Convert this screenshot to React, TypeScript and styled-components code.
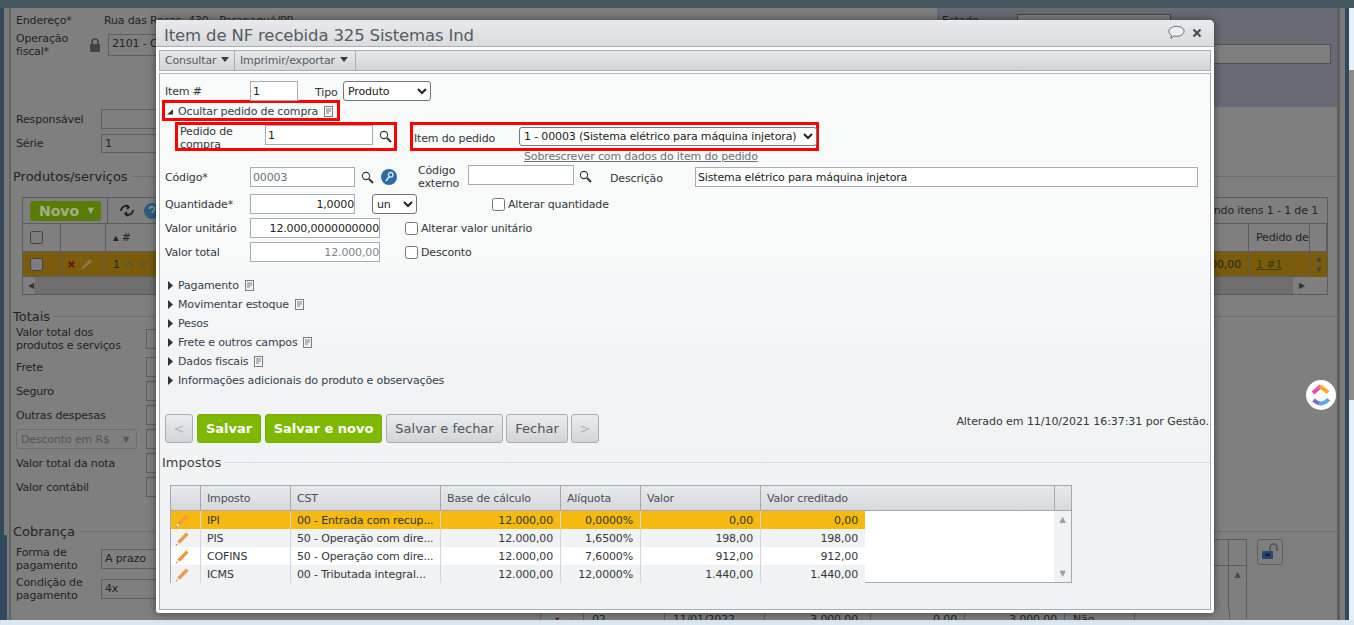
import React from "react";
import styled, { createGlobalStyle } from "styled-components";

const Global = createGlobalStyle`
  html, body { margin: 0; padding: 0; height: 625px; overflow: hidden; }
  body { font-family: "DejaVu Sans", Verdana, sans-serif; font-size: 11px; letter-spacing: -0.15px; }
  * { box-sizing: border-box; }
`;

/* ---------- page shell ---------- */
const Page = styled.div`position: relative; width: 1354px; height: 625px; overflow: hidden; display: flex; flex-direction: column; background: #7f7f7f;`;
const TopBar = styled.div`height: 8px; flex: none; background: #45575f;`;
const Middle = styled.div`height: 612px; flex: none; display: flex;`;
const BottomStrip = styled.div`flex: 1; background: #d9e7f2;`;
const LeftRail = styled.div`width: 11px; flex: none; display: flex; flex-direction: column; background: #7b7b7b; border-right: 2px solid #636363;`;
const RailDark = styled.div<{ $w: number; $h?: number }>`width: ${p => p.$w}px; flex: ${p => (p.$h ? "none" : 1)}; height: ${p => (p.$h ? `${p.$h}px` : "auto")}; background: #33475f;`;
const Main = styled.main`width: 1327px; flex: none; height: 612px; overflow: hidden; color: #232323; padding-left: 5px; border-right: 1px solid #5c5c5c;`;
const RightRail = styled.div`width: 16px; flex: none; display: flex; background: #7b7b7b; border-left: 2px solid #5f5f5f;`;
const RailGap = styled.div`width: 5px; flex: none;`;
const RailBlue = styled.div`width: 4px; flex: none; background: #33475f;`;
const ScrollTrack = styled.div`flex: 1; display: flex; flex-direction: column; background: #e7eff5;`;
const ScrollThumb = styled.div`height: 330px; margin-top: 62px; background: #8c8c8c;`;

/* ---------- dimmed background ---------- */
const HeaderRow = styled.div`height: 99px; margin-left: -5px; display: flex;`;
const HeaderLeft = styled.div`flex: 1; padding: 5px 0 0 5px;`;
const HeaderRight = styled.div`width: 400px; flex: none; background: #6a6a74; padding: 6px 6px 0 5px;`;
const StateRow = styled.div`display: flex; align-items: flex-start;`;
const StateLabel = styled.span`width: 75px; flex: none;`;
const StateBox = styled.div`width: 154px; height: 20px; border: 1px solid #444; background: #7f7f7f;`;
const WideBox = styled.div`height: 20px; margin: 10px 0 0 22px; border: 1px solid #505050; background: #7f7f7f;`;
const Inline = styled.div<{ $h?: number; $mt?: number }>`display: flex; align-items: center; height: ${p => p.$h ?? 14}px; margin-top: ${p => p.$mt ?? 0}px;`;
const BgLabel = styled.span<{ $w?: number }>`width: ${p => p.$w ?? 85}px; flex: none; line-height: 13px;`;
const BgValue = styled.span`padding-left: 3px; white-space: nowrap;`;
const BgBox = styled.div<{ $w?: number; $h?: number }>`width: ${p => p.$w ?? 60}px; height: ${p => p.$h ?? 20}px; flex: none; border: 1px solid #5f5f5f; padding: 2px 3px; white-space: nowrap; overflow: hidden;`;
const LockSlot = styled.span`width: 19px; flex: none; display: flex; color: #444;`;
const Legend = styled.div<{ $mt: number }>`display: flex; align-items: center; gap: 4px; height: 14px; margin: ${p => p.$mt}px 0 0 -3px; font-size: 13px; letter-spacing: 0; white-space: nowrap;`;
const LegendLine = styled.span<{ $c?: string }>`flex: 1; height: 1px; background: ${p => p.$c ?? "#6d6d6d"};`;

const BgTable = styled.div`width: 1306px; height: 98px; margin: 14px 0 0 6px; border: 1px solid #5c5c5c;`;
const BgToolbar = styled.div`height: 26px; display: flex; align-items: center; padding: 0 9px 0 7px; border-bottom: 1px solid #5c5c5c; color: #262626;`;
const NovoButton = styled.div`width: 71px; height: 20px; background: #5a7d0a; border-radius: 3px; color: #a0ae88; font-size: 14px; font-weight: bold; letter-spacing: 0; display: flex; align-items: center; justify-content: space-between; padding: 0 7px 0 9px;`;
const SmallArrow = styled.span`font-size: 8px;`;
const BgDivider = styled.span`width: 1px; height: 26px; background: #5c5c5c; margin: 0 10px 0 6px;`;
const PushRight = styled.span`margin-left: auto; white-space: nowrap;`;
const BgGrid = styled.div<{ $h: number; $bg?: string }>`display: grid; grid-template-columns: 38px 45px 1fr 61px 17px; height: ${p => p.$h}px; background: ${p => p.$bg ?? "transparent"};`;
const BgCell = styled.div<{ $between?: boolean }>`display: flex; align-items: center; justify-content: ${p => (p.$between ? "space-between" : "flex-start")}; gap: 5px; padding: 0 7px; border-right: 1px solid #5c5c5c; border-bottom: 1px solid #5c5c5c; white-space: nowrap; overflow: hidden;`;
const FakeCheck = styled.span`width: 13px; height: 13px; flex: none; border: 1px solid #444; border-radius: 2px; background: #7d7d7d;`;
const Underlined = styled.span`text-decoration: underline; color: #3f3a10;`;
const Ordering = styled.span`display: inline-flex; align-items: center; gap: 5px;`;
const ScrollCell = styled.div`display: flex; flex-direction: column; align-items: center; justify-content: center; gap: 5px; color: #444; font-size: 7px; line-height: 6px;`;
const BgScrollRow = styled.div`height: 17px; display: flex; align-items: center; justify-content: space-between; padding: 0 22px 0 5px; color: #333; font-size: 8px; background: linear-gradient(90deg, #7f7f7f 12px, #6f6f6f 12px, #6f6f6f 1270px, #7f7f7f 1270px);`;

const TotalRow = styled.div<{ $h: number }>`display: flex; align-items: center; height: ${p => p.$h}px;`;
const TotalLabel = styled.span`width: 130px; flex: none; line-height: 13px;`;
const DimSelect = styled.div`width: 121px; margin-right: 9px; flex: none; height: 20px; border: 1px solid #6c6c6c; border-radius: 3px; color: #555; display: flex; align-items: center; justify-content: space-between; padding: 0 7px 0 4px; white-space: nowrap;`;
const CobrancaRow = styled.div`display: flex; align-items: flex-start; margin-top: 1px;`;
const CobrancaFields = styled.div`width: 524px; flex: none; padding-top: 5px;`;
const CobrancaLabel = styled.span`width: 85px; flex: none; line-height: 13px;`;
const CobrancaTable = styled.div`width: 707px; flex: none; height: 80px; border-left: 1px solid #5c5c5c; border-top: 1px solid #5c5c5c; border-right: 1px solid #5c5c5c;`;
const CobrancaHead = styled.div`height: 26px; border-bottom: 1px solid #5c5c5c; display: flex; justify-content: flex-end;`;
const CobrancaHeadEnd = styled.div`width: 18px; border-left: 1px solid #5c5c5c;`;
const CobrancaSpace = styled.div`height: 44px; display: flex; justify-content: flex-end;`;
const CobrancaScroll = styled.div`width: 18px; display: flex; justify-content: center; padding-top: 5px; font-size: 8px; line-height: 8px; color: #4a4a4a; border-left: 1px solid #5c5c5c;`;
const CobrancaData = styled.div`display: grid; grid-template-columns: 6px 37px 81px 100px 106px 94px 100px 70px 95px 18px; height: 18px; align-items: center;`;
const DataCell = styled.div<{ $right?: boolean; $pr?: number }>`height: 18px; display: flex; align-items: center; gap: 7px; justify-content: ${p => (p.$right ? "flex-end" : "flex-start")}; padding: 0 ${p => p.$pr ?? 7}px 0 8px; border-right: 1px solid #5c5c5c; white-space: nowrap;`;
const LockButton = styled.div`width: 26px; height: 26px; margin-left: 10px; flex: none; border: 1px solid #5f5f5f; border-radius: 3px; display: flex; align-items: center; justify-content: center;`;

/* ---------- modal ---------- */
const Modal = styled.section`position: absolute; left: 156px; top: 20px; width: 1058px; height: 593px; background: #fff; border-radius: 0 5px 3px 3px; box-shadow: 0 0 9px rgba(0, 0, 0, 0.5); display: flex; flex-direction: column; color: #33373c;`;
const TitleBar = styled.header`height: 27px; flex: none; display: flex; align-items: center; padding: 4px 12px 0 8px; border-bottom: 1px solid #a9aeb3; border-radius: 0 5px 0 0; background: linear-gradient(#e9eaec, #d9dbde);`;
const Title = styled.h1`margin: 0; font-size: 16.5px; letter-spacing: -0.15px; font-weight: normal; color: #555c63; white-space: nowrap;`;
const TitleActions = styled.div`margin: -5px 0 0 auto; display: flex; align-items: center; gap: 7px;`;
const Toolbar = styled.nav`height: 21px; flex: none; margin: 3px 3px 0; display: flex; border: 1px solid #a9aeb3; background: linear-gradient(#e7e8ea, #d2d4d7);`;
const ToolItem = styled.div<{ $w: number }>`width: ${p => p.$w}px; padding-left: 5px; display: flex; align-items: center; gap: 5px; border-right: 1px solid #a9aeb3; color: #555b61; white-space: nowrap;`;
const Caret = styled.span`width: 0; height: 0; border-left: 4.5px solid transparent; border-right: 4.5px solid transparent; border-top: 5px solid #3a3a3a; margin-top: -3px;`;
const Panel = styled.div`height: 537px; flex: none; margin: 2px 3px 0; border: 1px solid #a9aeb3; border-top-color: #b5babf; background: linear-gradient(#f9fbfa 0, #f8f9f9 170px, #f2f3f5 305px, #f1f2f4 100%); padding: 0 0 0 5px;`;

const FormRow = styled.div<{ $mt?: number; $h?: number; $ind?: number }>`display: flex; align-items: center; height: ${p => p.$h ?? 20}px; margin-top: ${p => p.$mt ?? 0}px; padding-left: ${p => p.$ind ?? 0}px; white-space: nowrap;`;
const Label = styled.label<{ $w?: number; $pl?: number; $pt?: number }>`width: ${p => p.$w ?? 85}px; flex: none; line-height: 13px; white-space: normal; padding: ${p => p.$pt ?? 0}px 0 0 ${p => p.$pl ?? 0}px;`;
const TextBox = styled.input<{ $w: number; $right?: boolean; $muted?: string; $shift?: number }>`
  width: ${p => p.$w}px; height: 20px; flex: none; margin: ${p => p.$shift ?? 0}px 0 0; padding: 0 0 0 2px; border: 1px solid #a8acb0; background: #fff; outline: none;
  font: 11px "DejaVu Sans", Verdana, sans-serif; letter-spacing: -0.15px; color: ${p => p.$muted ?? "#222"}; text-align: ${p => (p.$right ? "right" : "left")};
`;
const Drop = styled.select<{ $w: number; $h?: number }>`
  width: ${p => p.$w}px; height: ${p => p.$h ?? 20}px; flex: none; margin: 0; padding: 0; border: 1px solid #767676; border-radius: 3px; background: #fff;
  font: 11px "DejaVu Sans", Verdana, sans-serif; letter-spacing: -0.15px; color: #222;
`;
const Check = styled.input`width: 13px; height: 13px; margin: 0 3px 0 0; flex: none;`;
const RedBox = styled.div<{ $w: number; $h: number; $ml: number; $mt?: number; $pt?: number }>`
  width: ${p => p.$w}px; height: ${p => p.$h}px; margin: ${p => p.$mt ?? 0}px 0 0 ${p => p.$ml}px; padding-top: ${p => p.$pt ?? 0}px; flex: none; border: 3px solid #f00; display: flex; align-items: center; white-space: nowrap;
`;
const ToggleList = styled.div`margin-top: 14px;`;
const Toggle = styled.div`height: 19px; display: flex; align-items: center; padding-left: 2px; color: #33404d; white-space: nowrap;`;
const ToggleText = styled.span`margin: 0 6px 0 5px;`;
const LinkText = styled.a`color: #6a7076; text-decoration: underline;`;
const IconSlot = styled.span<{ $ml?: number; $w?: number; $mt?: number }>`display: inline-flex; align-items: center; justify-content: center; flex: none; width: ${p => p.$w ?? 16}px; margin: ${p => p.$mt ?? 0}px 0 0 ${p => p.$ml ?? 0}px;`;
const Buttons = styled.div`height: 29px; margin-top: 24px; display: flex; align-items: flex-start; gap: 4px;`;
const Btn = styled.button<{ $w: number; $kind?: "primary" | "muted"; $tight?: boolean }>`
  width: ${p => p.$w}px; height: 29px; margin: 0 0 0 ${p => (p.$tight ? -1 : 0)}px; padding: 0; border-radius: 3px; letter-spacing: 0; font: ${p => (p.$kind === "primary" ? "bold " : "")}13px "DejaVu Sans", Verdana, sans-serif;
  border: 1px solid ${p => (p.$kind === "primary" ? "#79ab08" : "#a9aeb3")};
  background: ${p => (p.$kind === "primary" ? "#7fb800" : "linear-gradient(#ebecee, #d2d4d7)")};
  color: ${p => (p.$kind === "primary" ? "#fff" : p.$kind === "muted" ? "#b3b6ba" : "#4f555b")};
`;
const Audit = styled.span`margin: 1px 1px 0 auto; white-space: nowrap; line-height: 13px; letter-spacing: -0.05px; color: #33373c;`;
const ImpostosLegend = styled.div`display: flex; align-items: center; gap: 3px; height: 14px; margin: 12px 0 0 -3px; font-size: 13px; letter-spacing: 0; color: #3b3f44;`;
const Taxes = styled.div`width: 902px; height: 98px; margin: 16px 0 0 5px; border: 1px solid #a3a9af; background: #fff;`;
const TaxHead = styled.div`display: grid; grid-template-columns: 30px 90px 150px 120px 80px 120px 1fr 16px; height: 25px; border-bottom: 1px solid #a3a9af; background: linear-gradient(#e9eaec, #d6d8db);`;
const HeadCell = styled.div`display: flex; align-items: center; padding-left: 6px; border-right: 1px solid #a3a9af; color: #4a5058; &:last-child { border-right: 0; }`;
const TaxBody = styled.div`display: flex; height: 71px;`;
const TaxRows = styled.div`width: 694px; flex: none;`;
const TaxRow = styled.div<{ $bg: string }>`display: grid; grid-template-columns: 30px 90px 150px 120px 80px 120px 104px; height: 18px; background: ${p => p.$bg};`;
const TaxCell = styled.div<{ $right?: boolean }>`display: flex; align-items: center; justify-content: ${p => (p.$right ? "flex-end" : "flex-start")}; padding: 0 7px 0 6px; border-right: 1px solid #d4d6d9; white-space: nowrap; color: #33373c; &:last-child { border-right: 0; }`;
const PencilCell = styled(TaxCell)`padding: 0 0 0 4px;`;
const TaxBlank = styled.div`flex: 1;`;
const TaxScroll = styled.div`width: 17px; flex: none; background: #f1f2f4; display: flex; flex-direction: column; align-items: center; justify-content: space-between; padding: 5px 0 4px; font-size: 8px; line-height: 8px; color: #9a9ea3;`;
const Bubble = styled.div`position: absolute; left: 1306px; top: 380px; width: 30px; height: 30px; border-radius: 50%; background: #fff; display: flex;`;

/* ---------- drawings ---------- */
const Search = () => (
  <svg width="13" height="13" viewBox="0 0 13 13" fill="none" stroke="#333">
    <circle cx="5" cy="5" r="3.6" strokeWidth="1.1" fill="#fff" />
    <path d="M8 8l4 4" strokeWidth="2" />
  </svg>
);
const Note = () => (
  <svg width="9" height="11" viewBox="0 0 9 11" fill="#f4f5f5" stroke="#7a7d80" strokeWidth="1">
    <rect x=".5" y=".5" width="8" height="10" />
    <path d="M2 3h5M2 5h5M2 7h3" />
  </svg>
);
const Right = () => (
  <svg width="6" height="9" viewBox="0 0 6 9"><path d="M1 0l5 4.5L1 9z" fill="#333" /></svg>
);
const Open = () => (
  <svg width="6" height="7" viewBox="0 0 7 7"><path d="M7 1v6H0z" fill="#333" /></svg>
);
const Pencil = () => (
  <svg width="15" height="15" viewBox="0 0 15 15">
    <path d="M2.2 10.4L11 1.4l2.6 2.4-8.800 9z" fill="#ec9a45" />
    <path d="M2.2 10.4L.8 14.300l4-1.500z" fill="#f7e6cf" />
    <path d="M.8 14.300l1.400-.4-1-1z" fill="#444" />
  </svg>
);
const Key = () => (
  <svg width="16" height="16" viewBox="0 0 16 16">
    <circle cx="8" cy="8" r="8" fill="#2b6ca6" />
    <circle cx="9.700" cy="5.800" r="2.300" fill="none" stroke="#d8e6f2" strokeWidth="1.300" />
    <path d="M8.200 7.600L5 12" stroke="#d8e6f2" strokeWidth="1.500" />
  </svg>
);
const Lock = ({ c = "#444" }: { c?: string }) => (
  <svg width="12" height="14" viewBox="0 0 12 14">
    <path d="M3 6V4a3 3 0 016 0v2" fill="none" stroke={c} strokeWidth="1.600" />
    <rect x="1" y="6" width="10" height="8" rx="1" fill={c} />
  </svg>
);
const OpenLock = () => (
  <svg width="18" height="18" viewBox="0 0 18 18">
    <path d="M9 8V4.500a3.500 3.500 0 017 0V8" fill="none" stroke="#555" strokeWidth="1.600" />
    <rect x="1" y="8" width="11" height="8" rx="1" fill="#25496f" />
    <rect x="4" y="10.500" width="5" height="3" fill="#0d2440" />
  </svg>
);
const Sync = () => (
  <svg width="16" height="13" viewBox="0 0 16 13" fill="none" stroke="#1c1c1c" strokeWidth="1.600">
    <path d="M2 7C2 3 6 1 9 3" /><path d="M7 1l3 2-2 2" />
    <path d="M14 6c0 4-4 6-7 4" /><path d="M9 12l-3-2 2-2" />
  </svg>
);
const Help = () => (
  <svg width="14" height="16" viewBox="0 0 14 16">
    <circle cx="8" cy="8" r="8" fill="#2f5d82" />
    <path d="M5.500 6a2.500 2.500 0 115 0c0 2-2.500 2-2.500 4" fill="none" stroke="#8aa" strokeWidth="1.500" />
  </svg>
);
const Cross = () => (
  <svg width="7" height="7" viewBox="0 0 8 8"><path d="M1 1l6 6M7 1L1 7" stroke="#6a0f0f" strokeWidth="2" /></svg>
);
const DimPencil = () => (
  <svg width="14" height="14" viewBox="0 0 14 14"><path d="M1 13l2-4 7-7 2 2-7 7z" fill="#8b7750" /></svg>
);
const Chevron = ({ down = false }: { down?: boolean }) => (
  <svg width="9" height="6" viewBox="0 0 9 6" fill="none" stroke="#4a5a4a" strokeWidth="1.500">
    <path d={down ? "M1 1l3.500 3.500L8 1" : "M1 5l3.500-3.500L8 5"} />
  </svg>
);
const ChatBubble = () => (
  <svg width="17" height="15" viewBox="0 0 18 15" fill="#eceef0" stroke="#5e6468" strokeWidth="1">
    <path d="M9 1c4.200 0 8 1.900 8 5.200s-3.800 5.300-8 5.300c-1 0-1.800-.1-2.600-.3L3 13.800l.8-3.200C2 9.600 1 8 1 6.200 1 2.900 4.800 1 9 1z" />
  </svg>
);
const Close = () => (
  <svg width="10" height="10" viewBox="0 0 10 10"><path d="M1.500 1.500l7 7M8.500 1.500l-7 7" stroke="#4a4f53" strokeWidth="2.300" /></svg>
);
const ClickUp = () => (
  <svg width="30" height="30" viewBox="0 0 30 30" fill="none" strokeWidth="4">
    <path d="M7 13l8-7" stroke="#f0479f" />
    <path d="M14 6l8 6.500" stroke="#f7a92e" />
    <path d="M7.500 20c2 1.700 4 3 6 3.400" stroke="#7a6cc8" />
    <path d="M13 23.300c3.500.5 7-.9 9.700-4" stroke="#5aa5ec" />
  </svg>
);

const taxRows = [
  ["IPI", "00 - Entrada com recup...", "12.000,00", "0,0000%", "0,00", "0,00"],
  ["PIS", "50 - Operação com dire...", "12.000,00", "1,6500%", "198,00", "198,00"],
  ["COFINS", "50 - Operação com dire...", "12.000,00", "7,6000%", "912,00", "912,00"],
  ["ICMS", "00 - Tributada integral...", "12.000,00", "12,0000%", "1.440,00", "1.440,00"],
];
const taxBg = ["#f5b90f", "#f1f2f4", "#ffffff", "#f1f2f4"];
const sections: [string, boolean][] = [
  ["Pagamento", true],
  ["Movimentar estoque", true],
  ["Pesos", false],
  ["Frete e outros campos", true],
  ["Dados fiscais", true],
  ["Informações adicionais do produto e observações", false],
];

export default function App() {
  return (
    <Page>
      <Global />
      <TopBar />
      <Middle>
        <LeftRail>
          <RailDark $w={4} $h={527} />
          <RailDark $w={7} />
        </LeftRail>
        <Main>
          <HeaderRow>
            <HeaderLeft>
              <Inline>
                <BgLabel>Endereço*</BgLabel>
                <BgValue>Rua das Rosas, 430 - Paranaguá/PR</BgValue>
              </Inline>
              <Inline $h={22} $mt={7}>
                <BgLabel $w={73}>Operação fiscal*</BgLabel>
                <LockSlot><Lock /></LockSlot>
                <BgBox $w={200} $h={22}>2101 - Compra</BgBox>
              </Inline>
            </HeaderLeft>
            <HeaderRight>
              <StateRow><StateLabel>Estado</StateLabel><StateBox /></StateRow>
              <WideBox />
            </HeaderRight>
          </HeaderRow>
          <Inline $h={20} $mt={2}>
            <BgLabel>Responsável</BgLabel>
            <BgBox $w={120} />
          </Inline>
          <Inline $h={19} $mt={5}>
            <BgLabel>Série</BgLabel>
            <BgBox $w={120} $h={19}>1</BgBox>
          </Inline>
          <Legend $mt={16}>Produtos/serviços<LegendLine /></Legend>
          <BgTable>
            <BgToolbar>
              <NovoButton>Novo<SmallArrow>▼</SmallArrow></NovoButton>
              <BgDivider />
              <IconSlot $w={18}><Sync /></IconSlot>
              <IconSlot $ml={8} $w={14}><Help /></IconSlot>
              <PushRight>Exibindo itens 1 - 1 de 1</PushRight>
            </BgToolbar>
            <BgGrid $h={28}>
              <BgCell><FakeCheck /></BgCell>
              <BgCell />
              <BgCell>▴ #</BgCell>
              <BgCell>Pedido de</BgCell>
              <BgCell />
            </BgGrid>
            <BgGrid $h={25} $bg="#7a5c0c">
              <BgCell><FakeCheck /></BgCell>
              <BgCell><Cross /><DimPencil /></BgCell>
              <BgCell $between><Ordering>1 <Chevron /><Chevron down /></Ordering><span>12.000,00</span></BgCell>
              <BgCell><Underlined>1 #1</Underlined></BgCell>
              <ScrollCell><span>▲</span><span>▼</span></ScrollCell>
            </BgGrid>
            <BgScrollRow><span>◀</span><span>▶</span></BgScrollRow>
          </BgTable>
          <Legend $mt={14}>Totais<LegendLine /></Legend>
          <TotalRow $h={32}><TotalLabel>Valor total dos<br />produtos e serviços</TotalLabel><BgBox /></TotalRow>
          <TotalRow $h={24}><TotalLabel>Frete</TotalLabel><BgBox /></TotalRow>
          <TotalRow $h={24}><TotalLabel>Seguro</TotalLabel><BgBox /></TotalRow>
          <TotalRow $h={24}><TotalLabel>Outras despesas</TotalLabel><BgBox /></TotalRow>
          <TotalRow $h={24}><DimSelect>Desconto em R$<SmallArrow>▼</SmallArrow></DimSelect><BgBox /></TotalRow>
          <TotalRow $h={24}><TotalLabel>Valor total da nota</TotalLabel><BgBox /></TotalRow>
          <TotalRow $h={24}><TotalLabel>Valor contábil</TotalLabel><BgBox /></TotalRow>
          <Legend $mt={25}>Cobrança<LegendLine /></Legend>
          <CobrancaRow>
            <CobrancaFields>
              <TotalRow $h={30}>
                <CobrancaLabel>Forma de pagamento</CobrancaLabel>
                <BgBox $w={120}>A prazo</BgBox>
              </TotalRow>
              <TotalRow $h={30}>
                <CobrancaLabel>Condição de pagamento</CobrancaLabel>
                <BgBox $w={120}>4x</BgBox>
              </TotalRow>
            </CobrancaFields>
            <CobrancaTable>
              <CobrancaHead><CobrancaHeadEnd /></CobrancaHead>
              <CobrancaSpace><CobrancaScroll>▲</CobrancaScroll></CobrancaSpace>
              <CobrancaData>
                <span />
                <DataCell><Cross /><DimPencil /></DataCell>
                <DataCell>02</DataCell>
                <DataCell>11/01/2022</DataCell>
                <DataCell $right $pr={12}>3.000,00</DataCell>
                <DataCell $right>0,00</DataCell>
                <DataCell $right>3.000,00</DataCell>
                <DataCell>Não</DataCell>
                <DataCell />
              </CobrancaData>
            </CobrancaTable>
            <LockButton><OpenLock /></LockButton>
          </CobrancaRow>
        </Main>
        <RightRail>
          <RailGap />
          <RailBlue />
          <ScrollTrack><ScrollThumb /></ScrollTrack>
        </RightRail>
      </Middle>
      <BottomStrip />

      <Bubble><ClickUp /></Bubble>

      <Modal>
        <TitleBar>
          <Title>Item de NF recebida 325 Sistemas Ind</Title>
          <TitleActions><ChatBubble /><Close /></TitleActions>
        </TitleBar>
        <Toolbar>
          <ToolItem $w={75}>Consultar<Caret /></ToolItem>
          <ToolItem $w={121}>Imprimir/exportar<Caret /></ToolItem>
        </Toolbar>
        <Panel>
          <FormRow $mt={7}>
            <Label $pt={1}>Item #</Label>
            <TextBox $w={48} value="1" readOnly />
            <Label $w={45} $pl={17} $pt={3}>Tipo</Label>
            <Drop $w={88} defaultValue="Produto"><option>Produto</option></Drop>
          </FormRow>
          <RedBox $w={178} $h={21} $ml={-3} $mt={-1} $pt={2}>
            <Toggle><Open /><ToggleText>Ocultar pedido de compra</ToggleText><Note /></Toggle>
          </RedBox>
          <FormRow $h={29} $mt={1}>
            <RedBox $w={222} $h={29} $ml={10}>
              <Label $w={87} $pl={2} $pt={2}>Pedido de compra</Label>
              <TextBox $w={108} value="1" readOnly $shift={-3} />
              <IconSlot $ml={4}><Search /></IconSlot>
            </RedBox>
            <RedBox $w={409} $h={29} $ml={13}>
              <Label $w={106} $pl={1} $pt={4}>Item do pedido</Label>
              <Drop $w={298} $h={19} defaultValue="a">
                <option value="a">1 - 00003 (Sistema elétrico para máquina injetora)</option>
              </Drop>
            </RedBox>
          </FormRow>
          <FormRow $h={11} $ind={359}>
            <LinkText>Sobrescrever com dados do item do pedido</LinkText>
          </FormRow>
          <FormRow $mt={5}>
            <Label>Código*</Label>
            <TextBox $w={105} value="00003" readOnly $muted="#66717c" />
            <IconSlot $ml={4}><Search /></IconSlot>
            <IconSlot $ml={6}><Key /></IconSlot>
            <IconSlot $w={21} />
            <Label $w={50}>Código externo</Label>
            <TextBox $w={106} value="" readOnly $shift={-4} />
            <IconSlot $ml={3} $mt={-2}><Search /></IconSlot>
            <IconSlot $w={17} />
            <Label $pt={2}>Descrição</Label>
            <TextBox $w={503} value="Sistema elétrico para máquina injetora" readOnly />
          </FormRow>
          <FormRow $mt={7}>
            <Label>Quantidade*</Label>
            <TextBox $w={105} $right value="1,0000" readOnly />
            <IconSlot $w={17} />
            <Drop $w={45} defaultValue="un"><option>un</option></Drop>
            <IconSlot $w={75} />
            <Check type="checkbox" />Alterar quantidade
          </FormRow>
          <FormRow $mt={4}>
            <Label>Valor unitário</Label>
            <TextBox $w={130} $right value="12.000,0000000000" readOnly />
            <IconSlot $w={25} />
            <Check type="checkbox" />Alterar valor unitário
          </FormRow>
          <FormRow $mt={4}>
            <Label>Valor total</Label>
            <TextBox $w={130} $right value="12.000,00" readOnly $muted="#80868c" />
            <IconSlot $w={25} />
            <Check type="checkbox" />Desconto
          </FormRow>
          <ToggleList>
            {sections.map(([name, note]) => (
              <Toggle key={name}><Right /><ToggleText>{name}</ToggleText>{note && <Note />}</Toggle>
            ))}
          </ToggleList>
          <Buttons>
            <Btn $w={28} $kind="muted">&lt;</Btn>
            <Btn $w={64} $kind="primary">Salvar</Btn>
            <Btn $w={117} $kind="primary">Salvar e novo</Btn>
            <Btn $w={117}>Salvar e fechar</Btn>
            <Btn $w={62} $tight>Fechar</Btn>
            <Btn $w={28} $kind="muted" $tight>&gt;</Btn>
            <Audit>Alterado em 11/10/2021 16:37:31 por Gestão.</Audit>
          </Buttons>
          <ImpostosLegend>Impostos<LegendLine $c="#d8dadd" /></ImpostosLegend>
          <Taxes>
            <TaxHead>
              <HeadCell />
              <HeadCell>Imposto</HeadCell>
              <HeadCell>CST</HeadCell>
              <HeadCell>Base de cálculo</HeadCell>
              <HeadCell>Alíquota</HeadCell>
              <HeadCell>Valor</HeadCell>
              <HeadCell>Valor creditado</HeadCell>
              <HeadCell />
            </TaxHead>
            <TaxBody>
              <TaxRows>
                {taxRows.map((r, i) => (
                  <TaxRow key={r[0]} $bg={taxBg[i]}>
                    <PencilCell><Pencil /></PencilCell>
                    <TaxCell>{r[0]}</TaxCell>
                    <TaxCell>{r[1]}</TaxCell>
                    <TaxCell $right>{r[2]}</TaxCell>
                    <TaxCell $right>{r[3]}</TaxCell>
                    <TaxCell $right>{r[4]}</TaxCell>
                    <TaxCell $right>{r[5]}</TaxCell>
                  </TaxRow>
                ))}
              </TaxRows>
              <TaxBlank />
              <TaxScroll><span>▲</span><span>▼</span></TaxScroll>
            </TaxBody>
          </Taxes>
        </Panel>
      </Modal>
    </Page>
  );
}
